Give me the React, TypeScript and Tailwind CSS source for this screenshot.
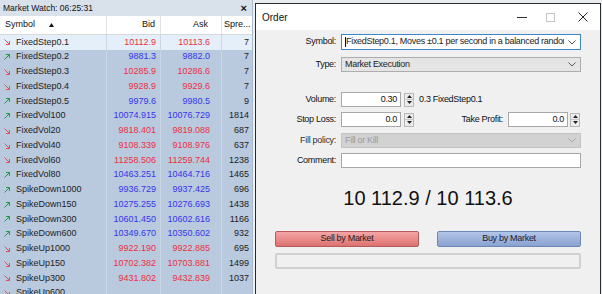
import React from "react";

type Row = { s: string; up: boolean; bid: string; ask: string; sp: string };

const rows: Row[] = [
  { s: "FixedStep0.1", up: false, bid: "10112.9", ask: "10113.6", sp: "7" },
  { s: "FixedStep0.2", up: true, bid: "9881.3", ask: "9882.0", sp: "7" },
  { s: "FixedStep0.3", up: false, bid: "10285.9", ask: "10286.6", sp: "7" },
  { s: "FixedStep0.4", up: false, bid: "9928.9", ask: "9929.6", sp: "7" },
  { s: "FixedStep0.5", up: true, bid: "9979.6", ask: "9980.5", sp: "9" },
  { s: "FixedVol100", up: true, bid: "10074.915", ask: "10076.729", sp: "1814" },
  { s: "FixedVol20", up: false, bid: "9818.401", ask: "9819.088", sp: "687" },
  { s: "FixedVol40", up: false, bid: "9108.339", ask: "9108.976", sp: "637" },
  { s: "FixedVol60", up: false, bid: "11258.506", ask: "11259.744", sp: "1238" },
  { s: "FixedVol80", up: true, bid: "10463.251", ask: "10464.716", sp: "1465" },
  { s: "SpikeDown1000", up: true, bid: "9936.729", ask: "9937.425", sp: "696" },
  { s: "SpikeDown150", up: true, bid: "10275.255", ask: "10276.693", sp: "1438" },
  { s: "SpikeDown300", up: true, bid: "10601.450", ask: "10602.616", sp: "1166" },
  { s: "SpikeDown600", up: true, bid: "10349.670", ask: "10350.602", sp: "932" },
  { s: "SpikeUp1000", up: false, bid: "9922.190", ask: "9922.885", sp: "695" },
  { s: "SpikeUp150", up: false, bid: "10702.382", ask: "10703.881", sp: "1499" },
  { s: "SpikeUp300", up: false, bid: "9431.802", ask: "9432.839", sp: "1037" },
  { s: "SpikeUp600", up: false, bid: "", ask: "", sp: "" },
];

function Arrow({ up }: { up: boolean }) {
  return up ? (
    <svg width="8" height="8" viewBox="0 0 8 8" className="shrink-0">
      <path d="M1.5 6.5 L6.5 1.5 M3 1.5 H6.5 V5" stroke="#1f9a45" strokeWidth="1" fill="none" />
    </svg>
  ) : (
    <svg width="8" height="8" viewBox="0 0 8 8" className="shrink-0">
      <path d="M1.5 1.5 L6.5 6.5 M3 6.5 H6.5 V3" stroke="#e0505c" strokeWidth="1" fill="none" />
    </svg>
  );
}

function Spinner() {
  return (
    <div className="w-[10px] h-[14px] flex flex-col border border-[#b8b8b8] bg-[#ececec]">
      <div className="flex-1 flex items-center justify-center border-b border-[#c8c8c8]">
        <svg width="5" height="3" viewBox="0 0 5 3"><path d="M0 3 L2.5 0 L5 3Z" fill="#222" /></svg>
      </div>
      <div className="flex-1 flex items-center justify-center">
        <svg width="5" height="3" viewBox="0 0 5 3"><path d="M0 0 L2.5 3 L5 0Z" fill="#222" /></svg>
      </div>
    </div>
  );
}

function Chevron({ color = "#555" }: { color?: string }) {
  return (
    <svg width="8" height="5" viewBox="0 0 8 5" className="shrink-0">
      <path d="M0.5 0.5 L4 4 L7.5 0.5" stroke={color} strokeWidth="1" fill="none" />
    </svg>
  );
}

export default function App() {
  return (
    <div className="w-[602px] h-[294px] overflow-hidden flex bg-[#e9ecef] font-['Liberation_Sans',Arial,sans-serif] text-[#111]">
      {/* Market Watch */}
      <div className="w-[253px] shrink-0 flex flex-col bg-[#b9c9de] border-r border-[#a9b9ce]">
        <div className="h-[16px] shrink-0 flex items-center justify-between pl-[3px] pr-[5px] bg-[#d9e1ea] text-[8.5px]">
          <span>Market Watch: 06:25:31</span>
          <span className="text-[11px] font-bold leading-none">×</span>
        </div>
        <div className="h-[19px] shrink-0 flex bg-white border-b border-[#d8d8d8] text-[9px] items-stretch">
          <div className="w-[107px] flex items-center pl-[5px] border-r border-[#e2e2e2]">
            <span>Symbol</span>
            <svg width="5" height="4" viewBox="0 0 5 4" className="ml-[14px]"><path d="M0 4 L2.5 0 L5 4Z" fill="#111" /></svg>
          </div>
          <div className="w-[54px] flex items-center justify-end pr-[5px] border-r border-[#e2e2e2]">Bid</div>
          <div className="w-[61px] flex items-center justify-end pr-[13px] border-r border-[#e2e2e2]">Ask</div>
          <div className="flex-1 flex items-center pl-[2px]">Spre...</div>
        </div>
        {rows.map((r, i) => (
          <div
            key={r.s}
            className={`h-[14.75px] shrink-0 flex items-stretch text-[9px] ${i === 0 ? "bg-[#e4eff9]" : ""}`}
          >
            <div className="w-[107px] flex items-center pl-[3px] gap-[5px] border-r border-[#c9d6e6]">
              <Arrow up={r.up} />
              <span className="text-[#222]">{r.s}</span>
            </div>
            <div className={`w-[54px] flex items-center justify-end pr-[4px] border-r border-[#c9d6e6] ${r.up ? "text-[#3535ee]" : "text-[#ee2f3f]"}`}>
              {r.bid}
            </div>
            <div className={`w-[61px] flex items-center justify-end pr-[11px] border-r border-[#c9d6e6] ${r.up ? "text-[#3535ee]" : "text-[#ee2f3f]"}`}>
              {r.ask}
            </div>
            <div className="flex-1 flex items-center justify-end pr-[3px] text-[#222]">{r.sp}</div>
          </div>
        ))}
      </div>

      {/* gap */}
      <div className="w-[2px] shrink-0 bg-[#eef1f4]" />

      {/* Order dialog */}
      <div className="flex-1 flex flex-col mt-[3px] mr-[1px] border-x border-t border-[#2a2a2a] bg-[#f0f0f0]">
        <div className="h-[26px] shrink-0 bg-white flex items-center pl-[6px]">
          <span className="text-[10px] text-[#111]">Order</span>
          <div className="ml-auto flex items-center">
            <div className="w-[10px] h-[1px] bg-[#333] mr-[19px]" />
            <div className="w-[9px] h-[9px] border border-[#c4c4c4] mr-[23px]" />
            <svg width="10" height="10" viewBox="0 0 10 10" className="mr-[12px]">
              <path d="M0.5 0.5 L9.5 9.5 M9.5 0.5 L0.5 9.5" stroke="#222" strokeWidth="1" />
            </svg>
          </div>
        </div>

        <div className="flex flex-col text-[9px] tracking-[-0.3px]">
          {/* Symbol */}
          <div className="flex items-center mt-[4px] h-[16px]">
            <div className="w-[80px] text-right">Symbol:</div>
            <div className="ml-[5px] w-[240px] h-[16px] bg-white border border-[#3d86c8] flex items-center pl-[3px] pr-[4px] overflow-hidden">
              <span className="w-[1px] h-[10px] bg-[#111] shrink-0" />
              <span className="whitespace-nowrap overflow-hidden flex-1 text-[#222]">FixedStep0.1, Moves ±0.1 per second in a balanced random walk</span>
              <span className="ml-[4px]"><Chevron /></span>
            </div>
          </div>
          {/* Type */}
          <div className="flex items-center mt-[7px] h-[15px]">
            <div className="w-[80px] text-right">Type:</div>
            <div className="ml-[5px] w-[240px] h-[15px] bg-[#e5e5e5] border border-[#adadad] flex items-center pl-[3px] pr-[4px]">
              <span className="flex-1 text-[#222]">Market Execution</span>
              <Chevron />
            </div>
          </div>
          {/* Volume */}
          <div className="flex items-center mt-[20px] h-[15px]">
            <div className="w-[80px] text-right">Volume:</div>
            <div className="ml-[5px] w-[60px] h-[15px] bg-white border border-[#a8a8a8] flex items-center justify-end pr-[3px]">0.30</div>
            <div className="ml-[3px]"><Spinner /></div>
            <div className="ml-[5px]">0.3 FixedStep0.1</div>
          </div>
          {/* Stop loss / Take profit */}
          <div className="flex items-center mt-[5px] h-[15px]">
            <div className="w-[80px] text-right">Stop Loss:</div>
            <div className="ml-[5px] w-[60px] h-[15px] bg-white border border-[#a8a8a8] flex items-center justify-end pr-[3px]">0.0</div>
            <div className="ml-[3px]"><Spinner /></div>
            <div className="w-[89px] text-right">Take Profit:</div>
            <div className="ml-[5px] w-[60px] h-[15px] bg-white border border-[#a8a8a8] flex items-center justify-end pr-[3px]">0.0</div>
            <div className="ml-[2px]"><Spinner /></div>
          </div>
          {/* Fill policy */}
          <div className="flex items-center mt-[6px] h-[15px]">
            <div className="w-[80px] text-right text-[#333]">Fill policy:</div>
            <div className="ml-[5px] w-[240px] h-[15px] bg-[#d2d2d2] border border-[#c4c4c4] flex items-center pl-[3px] pr-[4px]">
              <span className="flex-1 text-[#9a9a9a]">Fill or Kill</span>
              <Chevron color="#a8a8a8" />
            </div>
          </div>
          {/* Comment */}
          <div className="flex items-center mt-[5px] h-[15px]">
            <div className="w-[80px] text-right">Comment:</div>
            <div className="ml-[5px] w-[240px] h-[15px] bg-white border border-[#a8a8a8]" />
          </div>
        </div>

        {/* Price */}
        <div className="mt-[18px] h-[24px] flex items-center justify-center text-[20px] text-[#111]">
          10 112.9 / 10 113.6
        </div>

        {/* Buttons */}
        <div className="mt-[21px] flex px-[19px] justify-between text-[9px] tracking-[-0.3px]">
          <div className="w-[144px] h-[16px] rounded-[2px] border border-[#b65a5a] bg-gradient-to-b from-[#f4a5a5] to-[#dc7272] flex items-center justify-center text-[#2a1a1a]">
            Sell by Market
          </div>
          <div className="w-[144px] h-[16px] rounded-[2px] border border-[#6d86b8] bg-gradient-to-b from-[#b3c5e8] to-[#8aa2d0] flex items-center justify-center text-[#1a2030]">
            Buy by Market
          </div>
        </div>
        <div className="mt-[6px] mx-[19px] h-[16px] rounded-[2px] border-2 border-[#d0d0d0] bg-[#f0f0f0]" />
      </div>
    </div>
  );
}
